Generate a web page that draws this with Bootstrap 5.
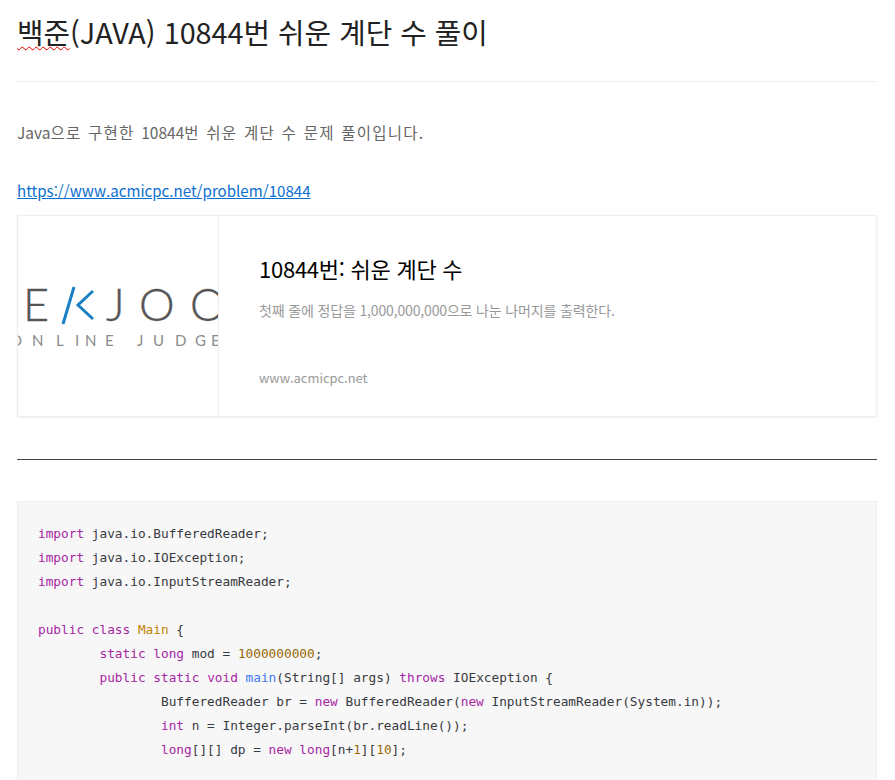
<!DOCTYPE html>
<html lang="ko">
<head>
<meta charset="utf-8">
<title>백준(JAVA) 10844번 쉬운 계단 수 풀이</title>
<link rel="stylesheet" href="https://cdn.jsdelivr.net/npm/bootstrap@5.3.0/dist/css/bootstrap.min.css">
<style>
html,body{overflow:hidden;height:780px}
body{background:#fff;font-family:"Noto Sans CJK KR","Noto Sans",sans-serif;color:#555}
.post-wrap{padding:0 18px 0 17px}
.post-title{font-size:28.8px;font-weight:400;line-height:45px;margin:9px 0 0;color:#222;padding-bottom:27px;border-bottom:1px solid #eee}
.sp-err{text-decoration:underline wavy #e00 1px;text-underline-offset:2px;text-decoration-skip-ink:none}
.intro{font-size:15.5px;font-weight:400;line-height:24px;margin:38px 0 0;color:#666;word-spacing:1px;letter-spacing:1.25px}
.intro-lat{letter-spacing:0}
.src-link{display:block;font-size:15.1px;font-weight:400;line-height:24px;margin-top:34px;color:#0b6fd0;text-decoration:underline}
.og-card{margin-top:13px;height:202px;border:1px solid #eee;box-shadow:0 1px 3px rgba(0,0,0,.06);border-radius:0;flex-direction:row;--bs-card-border-color:#eee}
.og-thumb{width:201px;flex:none;border-right:1px solid #eee}
.og-body{padding:36px 40px 0;display:flex;flex-direction:column;min-width:0;flex:1}
.og-title{font-size:22px;font-weight:400;line-height:32px;color:#000;margin:0;letter-spacing:-.25px}
.og-desc{font-size:14px;font-weight:400;line-height:20px;color:#999;margin:16px 0 0;letter-spacing:-.15px}
.og-host{font-size:12.9px;font-weight:400;line-height:20px;color:#999;margin:auto 0 28px}
.rule{margin:42px 0 41px;border:0;border-top:1px solid #444;opacity:1}
.code-box{margin:0;background:#f7f7f7;border:1px solid #eee;padding:20px 20px 0;font-family:"DejaVu Sans Mono","Liberation Mono",monospace;font-size:12.78px;line-height:24px;color:#383a42;white-space:pre;tab-size:8;overflow:hidden;height:300px}
.code-box code{font:inherit;color:inherit}
.t-kw{color:#a626a4}.t-cl{color:#c18401}.t-nu{color:#986801}.t-fn{color:#4078f2}
.logo-e{font-family:Lato,sans-serif;font-weight:300;font-size:45px;fill:#555;stroke:#555;stroke-width:.4}
.logo-s{font-family:Lato,sans-serif;font-weight:400;font-size:15px;fill:#8c8c8c}
</style>
</head>
<body>
<div class="post-wrap">
<h1 class="post-title"><span class="sp-err">백준</span>(JAVA) 10844번 쉬운 계단 수 풀이</h1>
<p class="intro"><span class="intro-lat">Java</span>으로 구현한 <span class="intro-lat">10844</span>번 쉬운 계단 수 문제 풀이입니다.</p>
<a class="src-link" href="#">https://www.acmicpc.net/problem/10844</a>
<div class="card og-card">
<div class="og-thumb">
<svg width="200" height="200" viewBox="0 0 200 200" role="img" aria-label="BAEKJOON ONLINE JUDGE">
<text class="logo-e" x="5" y="105">E</text>
<path d="M56 71 45 108" stroke="#1a7fc4" stroke-width="3" fill="none"/>
<path d="M75 75 60 89 75 103" stroke="#1a7fc4" stroke-width="3" fill="none"/>
<text class="logo-e" x="88 121 172" y="105">JOO</text>
<text class="logo-s" x="-8 14 38 57 67 87 119 135 157 177 193" y="130">ONLINEJUDGE</text>
</svg>
</div>
<div class="og-body">
<h2 class="og-title">10844번: 쉬운 계단 수</h2>
<p class="og-desc">첫째 줄에 정답을 1,000,000,000으로 나눈 나머지를 출력한다.</p>
<p class="og-host">www.acmicpc.net</p>
</div>
</div>
<hr class="rule">
<pre class="code-box"><code><span class="t-kw">import</span> java.io.BufferedReader;
<span class="t-kw">import</span> java.io.IOException;
<span class="t-kw">import</span> java.io.InputStreamReader;

<span class="t-kw">public</span> <span class="t-kw">class</span> <span class="t-cl">Main</span> {
	<span class="t-kw">static</span> <span class="t-kw">long</span> mod = <span class="t-nu">1000000000</span>;
	<span class="t-kw">public</span> <span class="t-kw">static</span> <span class="t-kw">void</span> <span class="t-fn">main</span>(String[] args) <span class="t-kw">throws</span> IOException {
		BufferedReader br = <span class="t-kw">new</span> BufferedReader(<span class="t-kw">new</span> InputStreamReader(System.in));
		<span class="t-kw">int</span> n = Integer.parseInt(br.readLine());
		<span class="t-kw">long</span>[][] dp = <span class="t-kw">new</span> <span class="t-kw">long</span>[n+<span class="t-nu">1</span>][<span class="t-nu">10</span>];
</code></pre>
</div>
<script src="https://cdn.jsdelivr.net/npm/bootstrap@5.3.0/dist/js/bootstrap.bundle.min.js"></script>
</body>
</html>
